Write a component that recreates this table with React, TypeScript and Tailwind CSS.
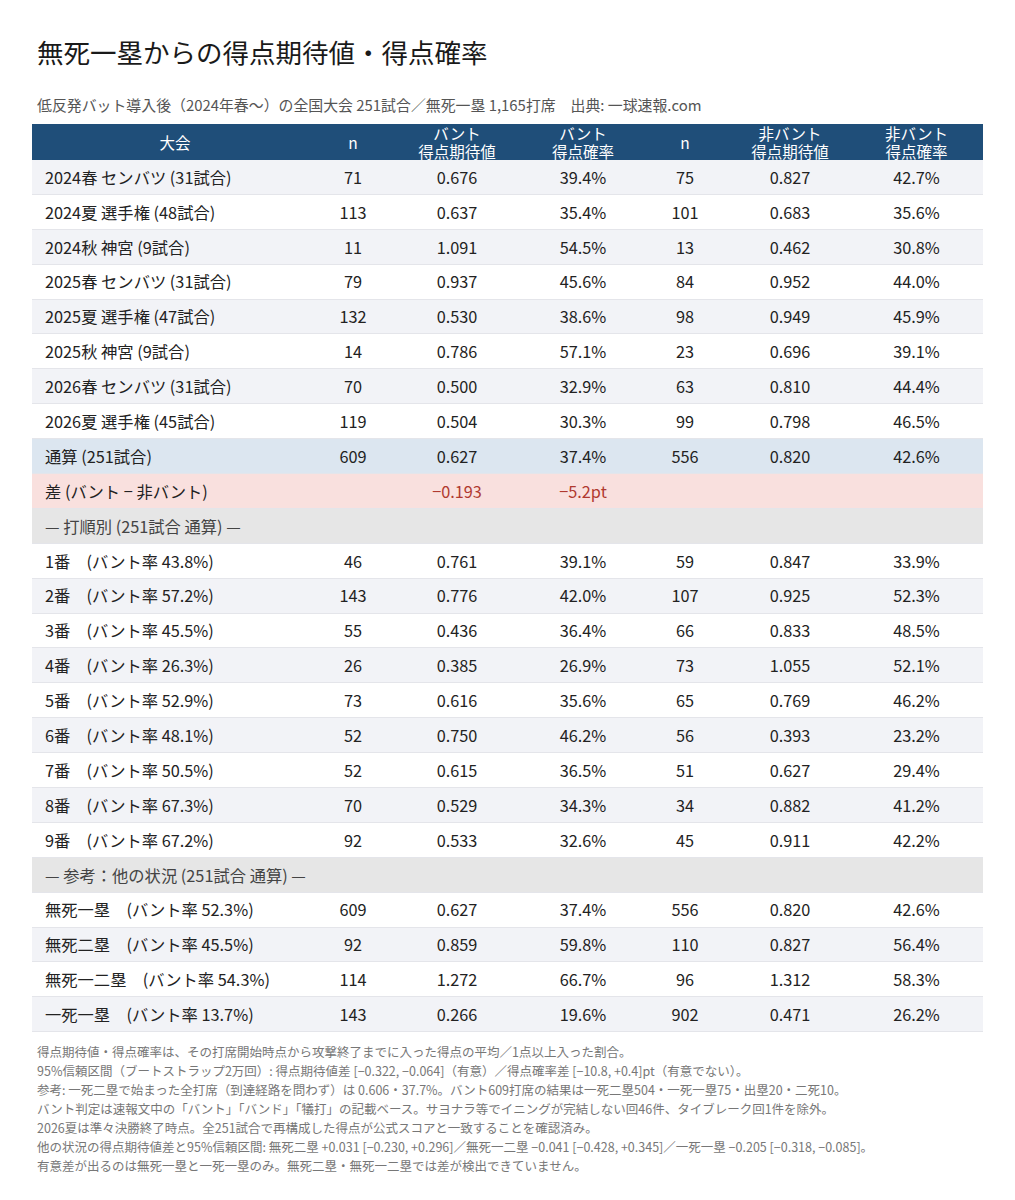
import React from 'react';

type Row = {
  label: string;
  n1?: string;
  ev1?: string;
  p1?: string;
  n2?: string;
  ev2?: string;
  p2?: string;
  kind?: 'light' | 'white' | 'total' | 'diff' | 'section';
};

const rows: Row[] = [
  { label: '2024春 センバツ (31試合)', n1: '71', ev1: '0.676', p1: '39.4%', n2: '75', ev2: '0.827', p2: '42.7%', kind: 'light' },
  { label: '2024夏 選手権 (48試合)', n1: '113', ev1: '0.637', p1: '35.4%', n2: '101', ev2: '0.683', p2: '35.6%', kind: 'white' },
  { label: '2024秋 神宮 (9試合)', n1: '11', ev1: '1.091', p1: '54.5%', n2: '13', ev2: '0.462', p2: '30.8%', kind: 'light' },
  { label: '2025春 センバツ (31試合)', n1: '79', ev1: '0.937', p1: '45.6%', n2: '84', ev2: '0.952', p2: '44.0%', kind: 'white' },
  { label: '2025夏 選手権 (47試合)', n1: '132', ev1: '0.530', p1: '38.6%', n2: '98', ev2: '0.949', p2: '45.9%', kind: 'light' },
  { label: '2025秋 神宮 (9試合)', n1: '14', ev1: '0.786', p1: '57.1%', n2: '23', ev2: '0.696', p2: '39.1%', kind: 'white' },
  { label: '2026春 センバツ (31試合)', n1: '70', ev1: '0.500', p1: '32.9%', n2: '63', ev2: '0.810', p2: '44.4%', kind: 'light' },
  { label: '2026夏 選手権 (45試合)', n1: '119', ev1: '0.504', p1: '30.3%', n2: '99', ev2: '0.798', p2: '46.5%', kind: 'white' },
  { label: '通算 (251試合)', n1: '609', ev1: '0.627', p1: '37.4%', n2: '556', ev2: '0.820', p2: '42.6%', kind: 'total' },
  { label: '差 (バント − 非バント)', ev1: '−0.193', p1: '−5.2pt', kind: 'diff' },
  { label: '— 打順別 (251試合 通算) —', kind: 'section' },
  { label: '1番　(バント率 43.8%)', n1: '46', ev1: '0.761', p1: '39.1%', n2: '59', ev2: '0.847', p2: '33.9%', kind: 'white' },
  { label: '2番　(バント率 57.2%)', n1: '143', ev1: '0.776', p1: '42.0%', n2: '107', ev2: '0.925', p2: '52.3%', kind: 'light' },
  { label: '3番　(バント率 45.5%)', n1: '55', ev1: '0.436', p1: '36.4%', n2: '66', ev2: '0.833', p2: '48.5%', kind: 'white' },
  { label: '4番　(バント率 26.3%)', n1: '26', ev1: '0.385', p1: '26.9%', n2: '73', ev2: '1.055', p2: '52.1%', kind: 'light' },
  { label: '5番　(バント率 52.9%)', n1: '73', ev1: '0.616', p1: '35.6%', n2: '65', ev2: '0.769', p2: '46.2%', kind: 'white' },
  { label: '6番　(バント率 48.1%)', n1: '52', ev1: '0.750', p1: '46.2%', n2: '56', ev2: '0.393', p2: '23.2%', kind: 'light' },
  { label: '7番　(バント率 50.5%)', n1: '52', ev1: '0.615', p1: '36.5%', n2: '51', ev2: '0.627', p2: '29.4%', kind: 'white' },
  { label: '8番　(バント率 67.3%)', n1: '70', ev1: '0.529', p1: '34.3%', n2: '34', ev2: '0.882', p2: '41.2%', kind: 'light' },
  { label: '9番　(バント率 67.2%)', n1: '92', ev1: '0.533', p1: '32.6%', n2: '45', ev2: '0.911', p2: '42.2%', kind: 'white' },
  { label: '— 参考：他の状況 (251試合 通算) —', kind: 'section' },
  { label: '無死一塁　(バント率 52.3%)', n1: '609', ev1: '0.627', p1: '37.4%', n2: '556', ev2: '0.820', p2: '42.6%', kind: 'white' },
  { label: '無死二塁　(バント率 45.5%)', n1: '92', ev1: '0.859', p1: '59.8%', n2: '110', ev2: '0.827', p2: '56.4%', kind: 'light' },
  { label: '無死一二塁　(バント率 54.3%)', n1: '114', ev1: '1.272', p1: '66.7%', n2: '96', ev2: '1.312', p2: '58.3%', kind: 'white' },
  { label: '一死一塁　(バント率 13.7%)', n1: '143', ev1: '0.266', p1: '19.6%', n2: '902', ev2: '0.471', p2: '26.2%', kind: 'light' },
];

const notes = [
  '得点期待値・得点確率は、その打席開始時点から攻撃終了までに入った得点の平均／1点以上入った割合。',
  '95%信頼区間（ブートストラップ2万回）: 得点期待値差 [−0.322, −0.064]（有意）／得点確率差 [−10.8, +0.4]pt（有意でない）。',
  '参考: 一死二塁で始まった全打席（到達経路を問わず）は 0.606・37.7%。バント609打席の結果は一死二塁504・一死一塁75・出塁20・二死10。',
  'バント判定は速報文中の「バント」「バンド」「犠打」の記載ベース。サヨナラ等でイニングが完結しない回46件、タイブレーク回1件を除外。',
  '2026夏は準々決勝終了時点。全251試合で再構成した得点が公式スコアと一致することを確認済み。',
  '他の状況の得点期待値差と95%信頼区間: 無死二塁 +0.031 [−0.230, +0.296]／無死一二塁 −0.041 [−0.428, +0.345]／一死一塁 −0.205 [−0.318, −0.085]。',
  '有意差が出るのは無死一塁と一死一塁のみ。無死二塁・無死一二塁では差が検出できていません。',
];

const gridCols = 'grid grid-cols-[286px_70px_138px_114px_90px_120px_133px]';

const rowBg = (kind?: Row['kind']) => {
  switch (kind) {
    case 'light':
      return 'bg-[#f2f3f7]';
    case 'total':
      return 'bg-[#dce6f0]';
    case 'diff':
      return 'bg-[#f9e0de]';
    case 'section':
      return 'bg-[#e6e6e6]';
    default:
      return 'bg-white';
  }
};

const App = () => {
  return (
    <div
      className="w-[1015px] h-[1200px] bg-white text-[#222]"
      style={{ fontFamily: '"Noto Sans CJK JP", "Noto Sans", sans-serif' }}
    >
      <div className="pt-[34px] pl-[37px]">
        <h1 className="text-[26.5px] leading-[36px] font-normal text-[#1a1a1a]">無死一塁からの得点期待値・得点確率</h1>
        <p className="mt-[25px] text-[14.9px] leading-[20px] text-[#555]">
          低反発バット導入後（2024年春～）の全国大会 251試合／無死一塁 1,165打席　出典: 一球速報.com
        </p>
      </div>

      <div className="ml-[32px] mt-[9px] w-[951px]">
        {/* header */}
        <div className={`${gridCols} h-[36px] bg-[#1f4e79] text-white text-[15.5px] leading-[18px]`}>
          <div className="flex items-center justify-center">大会</div>
          <div className="flex items-center justify-center">n</div>
          <div className="flex flex-col items-center justify-center">
            <span>バント</span>
            <span>得点期待値</span>
          </div>
          <div className="flex flex-col items-center justify-center">
            <span>バント</span>
            <span>得点確率</span>
          </div>
          <div className="flex items-center justify-center">n</div>
          <div className="flex flex-col items-center justify-center">
            <span>非バント</span>
            <span>得点期待値</span>
          </div>
          <div className="flex flex-col items-center justify-center">
            <span>非バント</span>
            <span>得点確率</span>
          </div>
        </div>

        {rows.map((r, i) => (
          <div
            key={i}
            className={`${gridCols} h-[34.9px] items-center text-[16.3px] border-b-[1.5px] border-[#e4e5ea] ${rowBg(r.kind)}`}
          >
            <div className={`pl-[13px] whitespace-nowrap ${r.kind === 'section' ? 'text-[#444]' : ''}`}>{r.label}</div>
            <div className="text-center">{r.n1}</div>
            <div className={`text-center ${r.kind === 'diff' ? 'text-[#b0392f]' : ''}`}>{r.ev1}</div>
            <div className={`text-center ${r.kind === 'diff' ? 'text-[#b0392f]' : ''}`}>{r.p1}</div>
            <div className="text-center">{r.n2}</div>
            <div className="text-center">{r.ev2}</div>
            <div className="text-center">{r.p2}</div>
          </div>
        ))}
      </div>

      <div className="pl-[37px] mt-[10px] text-[12.5px] leading-[19px] text-[#777]">
        {notes.map((n, i) => (
          <p key={i} className="whitespace-nowrap">{n}</p>
        ))}
      </div>
    </div>
  );
};

export default App;
